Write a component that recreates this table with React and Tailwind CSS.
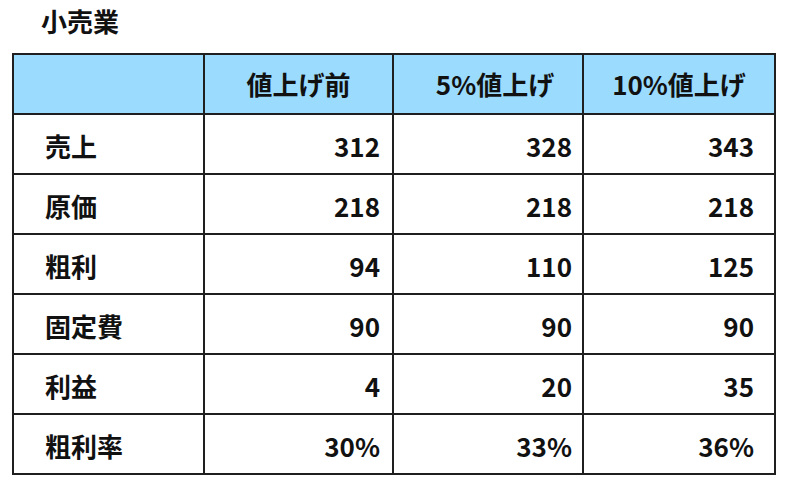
const rows = [
  { label: "売上", values: ["312", "328", "343"] },
  { label: "原価", values: ["218", "218", "218"] },
  { label: "粗利", values: ["94", "110", "125"] },
  { label: "固定費", values: ["90", "90", "90"] },
  { label: "利益", values: ["4", "20", "35"] },
  { label: "粗利率", values: ["30%", "33%", "36%"] },
]

const padRight = ["pr-[12px]", "pr-[10px]", "pr-[20px]"]

export default function App() {
  return (
    <div
      className="w-[791px] h-[493px] bg-white text-[#111] font-bold"
      style={{ fontFamily: '"Noto Sans CJK JP", "Noto Sans", sans-serif' }}
    >
      <h1 className="pl-[41px] pt-[4px] text-[26px] leading-[34px] font-bold">小売業</h1>
      <table className="ml-[12px] mt-[15px] w-[762px] table-fixed border-collapse border-2 border-[#1f1f1f] text-[26px] leading-none">
        <colgroup>
          <col className="w-[191px]" />
          <col className="w-[189px]" />
          <col className="w-[190px]" />
          <col className="w-[192px]" />
        </colgroup>
        <thead>
          <tr className="h-[60px] bg-[#9bdbfd]">
            <th className="border-2 border-[#1f1f1f]"></th>
            <th className="border-2 border-[#1f1f1f] text-center font-bold">値上げ前</th>
            <th className="border-2 border-[#1f1f1f] text-center font-bold pl-[14px]">5%値上げ</th>
            <th className="border-2 border-[#1f1f1f] text-center font-bold">10%値上げ</th>
          </tr>
        </thead>
        <tbody>
          {rows.map((row) => (
            <tr key={row.label} className="h-[60px]">
              <td className="border-2 border-[#1f1f1f] pl-[31px] pt-[4px]">{row.label}</td>
              {row.values.map((v, i) => (
                <td key={i} className={`border-2 border-[#1f1f1f] text-right pt-[4px] ${padRight[i]}`}>
                  {v}
                </td>
              ))}
            </tr>
          ))}
        </tbody>
      </table>
    </div>
  )
}
